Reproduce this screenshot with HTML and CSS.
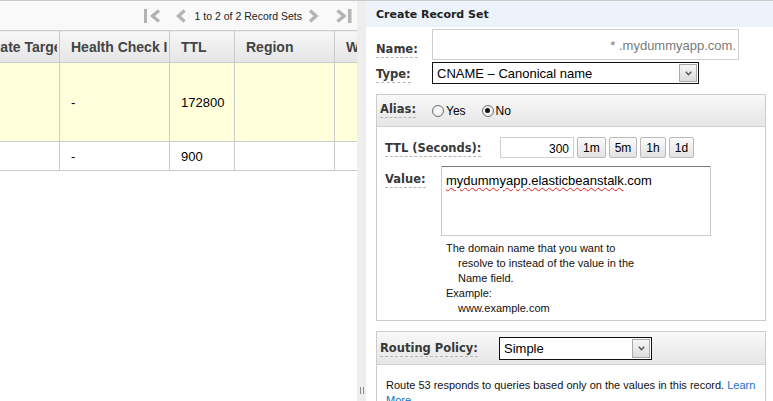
FILE: index.html
```html
<!DOCTYPE html>
<html>
<head>
<meta charset="utf-8">
<title>Create Record Set</title>
<link rel="stylesheet" href="styles.css">
</head>
<body>
<div class="page">
  <section class="left">
    <div class="pager">
      <svg class="pg-first" width="17" height="14" viewBox="0 0 17 14"><rect x="0" y="0" width="3" height="14" fill="#b4b4b4"/><polyline points="15,1.5 8.5,7 15,12.5" fill="none" stroke="#b4b4b4" stroke-width="3.4"/></svg>
      <svg class="pg-prev" width="10" height="14" viewBox="0 0 10 14"><polyline points="8.5,1.5 2.5,7 8.5,12.5" fill="none" stroke="#b4b4b4" stroke-width="3.4"/></svg>
      <span class="pg-text">1 to 2 of 2 Record Sets</span>
      <svg class="pg-next" width="11" height="14" viewBox="0 0 11 14"><polyline points="2,1.5 8,7 2,12.5" fill="none" stroke="#b4b4b4" stroke-width="3.4"/></svg>
      <svg class="pg-last" width="16" height="14" viewBox="0 0 16 14"><polyline points="1.5,1.5 8,7 1.5,12.5" fill="none" stroke="#b4b4b4" stroke-width="3.4"/><rect x="12" y="0" width="3.5" height="14" fill="#b4b4b4"/></svg>
    </div>
    <div class="grid-wrap">
      <table class="grid">
        <colgroup>
          <col class="c1"><col class="c2"><col class="c3"><col class="c4"><col class="c5">
        </colgroup>
        <thead>
          <tr><th><div class="th-clip">Evaluate Target Health</div></th><th><div class="th-clip">Health Check ID</div></th><th><div class="th-clip">TTL</div></th><th><div class="th-clip">Region</div></th><th><div class="th-clip">Weight</div></th></tr>
        </thead>
        <tbody>
          <tr class="sel"><td></td><td>-</td><td>172800</td><td></td><td></td></tr>
          <tr class="plain"><td></td><td>-</td><td>900</td><td></td><td></td></tr>
        </tbody>
      </table>
    </div>
  </section>
  <div class="splitter"><span class="grip"></span></div>
  <section class="right">
    <div class="rhead">Create Record Set</div>
    <div class="form">
      <div class="row name-row">
        <span class="lbl-cell"><span class="lbl">Name:</span></span>
        <div class="input name-input">* .mydummyapp.com.</div>
      </div>
      <div class="row type-row">
        <span class="lbl-cell"><span class="lbl">Type:</span></span>
        <div class="select type-select"><span class="sel-text">CNAME – Canonical name</span><span class="sel-arrow"><svg width="7" height="5" viewBox="0 0 7 5"><polyline points="0.8,0.8 3.5,3.8 6.2,0.8" fill="none" stroke="#555" stroke-width="1.4"/></svg></span></div>
      </div>

      <div class="box alias-box">
        <div class="box-head">
          <span class="lbl">Alias:</span>
          <span class="radio"></span><span class="radio-text">Yes</span>
          <span class="radio checked"></span><span class="radio-text">No</span>
        </div>
        <div class="box-body">
          <div class="ttl-row">
            <span class="ttl-lbl"><span class="lbl">TTL (Seconds):</span></span>
            <div class="input ttl-input">300</div>
            <span class="btn">1m</span><span class="btn">5m</span><span class="btn">1h</span><span class="btn">1d</span>
          </div>
          <div class="value-row">
            <span class="val-lbl"><span class="lbl">Value:</span></span>
            <div class="textarea"><span class="misspelt">mydummyapp.elasticbeanstalk</span>.com</div>
          </div>
          <div class="help">
            <p class="hl">The domain name that you want to</p>
            <p class="hl indent">resolve to instead of the value in the</p>
            <p class="hl indent">Name field.</p>
            <p class="hl">Example:</p>
            <p class="hl indent">www.example.com</p>
          </div>
        </div>
      </div>

      <div class="box routing-box">
        <div class="box-head routing-head">
          <span class="rp-lbl"><span class="lbl">Routing Policy:</span></span>
          <div class="select rp-select"><span class="sel-text">Simple</span><span class="sel-arrow"><svg width="7" height="5" viewBox="0 0 7 5"><polyline points="0.8,0.8 3.5,3.8 6.2,0.8" fill="none" stroke="#555" stroke-width="1.4"/></svg></span></div>
        </div>
        <div class="box-body routing-body">
          <p class="route-text">Route 53 responds to queries based only on the values in this record. <a class="link">Learn More</a></p>
        </div>
      </div>
    </div>
  </section>
</div>
</body>
</html>
```
FILE: styles.css
```css
* { box-sizing: border-box; }
html, body { margin: 0; padding: 0; }
body {
  width: 773px;
  height: 401px;
  overflow: hidden;
  background: #fff;
  font-family: "Liberation Sans", Arial, sans-serif;
  font-size: 13px;
  color: #000;
}
p { margin: 0; }

.page {
  display: flex;
  height: 401px;
  border-top: 1px solid #c9c9c9;
}

/* ---------- left grid pane ---------- */
.left {
  width: 357px;
  flex: none;
  overflow: hidden;
  background: #fff;
}
.pager {
  height: 29px;
  display: flex;
  align-items: center;
  justify-content: flex-end;
  padding-right: 5px;
  background: #f9f9f9;
  font-size: 10.5px;
  color: #222;
}
.pager svg { display: block; flex: none; }
.pg-first { margin-right: 15px; }
.pg-prev { margin-right: 9px; }
.pg-text { margin-right: 6px; }
.pg-next { margin-right: 17px; }

.grid-wrap { overflow: hidden; }
.grid {
  border-collapse: collapse;
  table-layout: fixed;
  width: 503px;
  margin-left: -49px;
}
.grid .c1 { width: 108px; }
.grid .c2 { width: 110px; }
.grid .c3 { width: 65px; }
.grid .c4 { width: 100px; }
.grid .c5 { width: 120px; }
.grid th {
  height: 32px;
  background: linear-gradient(#f7f7f7, #e5e5e5);
  border: 1px solid #cbcbcb;
  text-align: left;
  font-weight: bold;
  font-size: 14px;
  color: #444;
  padding: 0 2px 0 11px;
}
.th-clip {
  white-space: nowrap;
  overflow: hidden;
}
.grid td {
  border: 1px solid #cbcbcb;
  padding: 0 0 0 11px;
  white-space: nowrap;
  overflow: hidden;
  font-size: 13px;
}
.grid tr.sel td { background: #ffffdc; height: 79px; }
.grid tr.plain td { height: 29px; }

/* ---------- splitter ---------- */
.splitter {
  width: 9px;
  flex: none;
  background: #eeeeee;
  display: flex;
  align-items: flex-end;
  justify-content: center;
  padding-bottom: 7px;
}
.grip {
  width: 4px;
  height: 7px;
  border-left: 1px solid #8a8a8a;
  border-right: 1px solid #8a8a8a;
}

/* ---------- right form pane ---------- */
.right {
  flex: 1;
  min-width: 0;
  display: flex;
  flex-direction: column;
}
.rhead {
  height: 26px;
  flex: none;
  background: #edf3fb;
  padding-left: 10px;
  display: flex;
  align-items: center;
  font: bold 11px "DejaVu Sans", Verdana, sans-serif;
  color: #222;
}
.form {
  padding: 2px 7px 0 10px;
}
.lbl {
  display: inline-block;
  font: bold 11.5px/13px "DejaVu Sans", Verdana, sans-serif;
  color: #383838;
  border-bottom: 1px dashed #b5b5b5;
  padding-bottom: 1px;
}
.row { display: flex; }
.lbl-cell { width: 56px; flex: none; }
.name-row { align-items: flex-end; }
.name-row .lbl-cell { padding-bottom: 2px; }
.input {
  border: 1px solid #cfcfcf;
  background: #fff;
  text-align: right;
}
.name-input {
  width: 307px;
  height: 31px;
  padding: 8px 2px 0 0;
  color: #7a7a7a;
  font-size: 13px;
  line-height: 15px;
}
.type-row { margin-top: 2px; align-items: center; }
.type-row .lbl-cell { padding-top: 2px; }
.select {
  display: flex;
  align-items: center;
  border: 1px solid #111;
  background: #fff;
  padding: 1px;
}
.sel-text { flex: 1; padding-left: 3px; font-size: 13px; line-height: 15px; }
.sel-arrow {
  width: 18px;
  height: 100%;
  flex: none;
  display: flex;
  align-items: center;
  justify-content: center;
  border: 1px solid #a9a9a9;
  background: linear-gradient(#f6f6f6, #dcdcdc);
}
.sel-arrow svg { display: block; }
.type-select { width: 267px; height: 22px; }

.box {
  border: 1px solid #cccccc;
  background: #fff;
}
.alias-box { margin-top: 10px; }
.box-head {
  height: 32px;
  display: flex;
  align-items: center;
  padding-left: 3px;
  background: linear-gradient(#f8f8f8, #e6e6e6);
  border-bottom: 1px solid #d2d2d2;
}
.box-head .lbl { margin-right: 16px; }
.radio {
  width: 12px;
  height: 12px;
  flex: none;
  border-radius: 50%;
  border: 1px solid #707070;
  background: radial-gradient(circle at 50% 40%, #ffffff, #e6e6e6);
  position: relative;
}
.radio.checked::after {
  content: "";
  position: absolute;
  left: 2.5px;
  top: 2.5px;
  width: 5px;
  height: 5px;
  border-radius: 50%;
  background: #111;
}
.radio-text {
  font-size: 12px;
  margin-left: 2px;
  margin-right: 16px;
}
.box-head .radio-text:last-child { margin-right: 0; }

.box-body { padding: 10px 0 4px 8px; }
.ttl-row { display: flex; align-items: center; height: 21px; }
.ttl-lbl { width: 115px; flex: none; padding-top: 1px; }
.ttl-input {
  width: 74px;
  height: 21px;
  padding: 4px 4px 0 0;
  font-size: 12px;
  line-height: 14px;
  margin-right: 3px;
}
.btn {
  height: 21px;
  padding: 0 5px;
  margin-right: 3px;
  display: flex;
  align-items: center;
  justify-content: center;
  font-size: 12px;
  border: 1px solid #b9b9b9;
  border-radius: 2px;
  background: linear-gradient(#fbfbfb, #e2e2e2);
}
.value-row { display: flex; margin-top: 8px; }
.val-lbl { width: 56px; flex: none; padding-top: 5px; }
.textarea {
  width: 270px;
  height: 70px;
  border: 1px solid #cccccc;
  border-top-color: #7a7a7a;
  padding: 6px 4px;
  font-size: 13px;
  line-height: 15px;
}
.misspelt {
  text-decoration: underline wavy #e02020;
  text-decoration-thickness: 1px;
  text-underline-offset: 2px;
}
.help {
  margin: 5px 0 0 61px;
  font-size: 11px;
  line-height: 15px;
  color: #111;
}
.hl.indent { padding-left: 12px; }

.routing-box { margin-top: 10px; }
.routing-head { height: 33px; }
.rp-lbl { width: 119px; flex: none; }
.rp-lbl .lbl { margin-right: 0; }
.rp-select { width: 153px; height: 23px; }
.routing-body { padding: 13px 8px 0 9px; height: 60px; }
.route-text { font-size: 11px; line-height: 15px; color: #111; }
.link { color: #1a6ec8; text-decoration: none; }
```
